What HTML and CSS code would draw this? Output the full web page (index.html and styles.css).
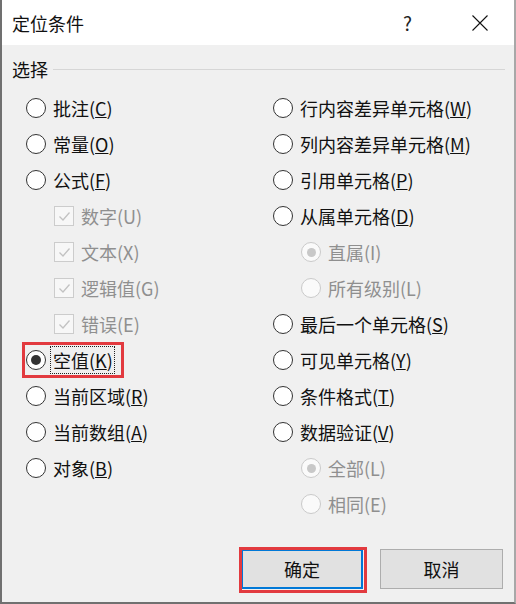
FILE: index.html
```html
<!DOCTYPE html>
<html lang="zh-CN">
<head>
<meta charset="utf-8">
<title>定位条件</title>
<link rel="stylesheet" href="styles.css">
</head>
<body>
<div class="dialog">
  <div class="titlebar">
    <span class="title">定位条件</span>
    <span class="help">?</span>
    <span class="close"><svg width="16" height="16" viewBox="0 0 16 16"><path d="M0.5 0.5 L15.5 15.5 M15.5 0.5 L0.5 15.5" stroke="#111" stroke-width="1.1" fill="none"/></svg></span>
  </div>
  <div class="body">
    <div class="group"><span class="group-label">选择</span><span class="rule"></span></div>
    <div class="options">
      <div class="col">
        <div class="opt"><span class="radio"></span><span class="lbl">批注(<u>C</u>)</span></div>
        <div class="opt"><span class="radio"></span><span class="lbl">常量(<u>O</u>)</span></div>
        <div class="opt"><span class="radio"></span><span class="lbl">公式(<u>F</u>)</span></div>
        <div class="opt sub disabled"><span class="check"><svg width="15" height="15" viewBox="0 0 15 15"><path d="M2.5 7.5 L6 11 L12.5 3.5" stroke="#c2c2c2" stroke-width="1.3" fill="none"/></svg></span><span class="lbl">数字(U)</span></div>
        <div class="opt sub disabled"><span class="check"><svg width="15" height="15" viewBox="0 0 15 15"><path d="M2.5 7.5 L6 11 L12.5 3.5" stroke="#c2c2c2" stroke-width="1.3" fill="none"/></svg></span><span class="lbl">文本(X)</span></div>
        <div class="opt sub disabled"><span class="check"><svg width="15" height="15" viewBox="0 0 15 15"><path d="M2.5 7.5 L6 11 L12.5 3.5" stroke="#c2c2c2" stroke-width="1.3" fill="none"/></svg></span><span class="lbl">逻辑值(G)</span></div>
        <div class="opt sub disabled"><span class="check"><svg width="15" height="15" viewBox="0 0 15 15"><path d="M2.5 7.5 L6 11 L12.5 3.5" stroke="#c2c2c2" stroke-width="1.3" fill="none"/></svg></span><span class="lbl">错误(E)</span></div>
        <div class="opt marked"><span class="radio on"></span><span class="lbl focus">空值(<u>K</u>)</span></div>
        <div class="opt"><span class="radio"></span><span class="lbl">当前区域(<u>R</u>)</span></div>
        <div class="opt"><span class="radio"></span><span class="lbl">当前数组(<u>A</u>)</span></div>
        <div class="opt"><span class="radio"></span><span class="lbl">对象(<u>B</u>)</span></div>
      </div>
      <div class="col">
        <div class="opt"><span class="radio"></span><span class="lbl">行内容差异单元格(<u>W</u>)</span></div>
        <div class="opt"><span class="radio"></span><span class="lbl">列内容差异单元格(<u>M</u>)</span></div>
        <div class="opt"><span class="radio"></span><span class="lbl">引用单元格(<u>P</u>)</span></div>
        <div class="opt"><span class="radio"></span><span class="lbl">从属单元格(<u>D</u>)</span></div>
        <div class="opt sub disabled"><span class="radio on"></span><span class="lbl">直属(I)</span></div>
        <div class="opt sub disabled"><span class="radio"></span><span class="lbl">所有级别(L)</span></div>
        <div class="opt"><span class="radio"></span><span class="lbl">最后一个单元格(<u>S</u>)</span></div>
        <div class="opt"><span class="radio"></span><span class="lbl">可见单元格(<u>Y</u>)</span></div>
        <div class="opt"><span class="radio"></span><span class="lbl">条件格式(<u>T</u>)</span></div>
        <div class="opt"><span class="radio"></span><span class="lbl">数据验证(<u>V</u>)</span></div>
        <div class="opt sub disabled"><span class="radio on"></span><span class="lbl">全部(L)</span></div>
        <div class="opt sub disabled"><span class="radio"></span><span class="lbl">相同(E)</span></div>
      </div>
    </div>
    <div class="buttons">
      <button class="btn default marked-btn">确定</button>
      <button class="btn">取消</button>
    </div>
  </div>
</div>
</body>
</html>
```

FILE: styles.css
```css
* { box-sizing: border-box; }
html, body { margin: 0; padding: 0; background: #f0f0f0; }
body {
  font-family: "Noto Sans CJK SC", "Noto Sans", sans-serif;
  color: #111;
}
.dialog {
  width: 516px;
  height: 604px;
  background: #f0f0f0;
  border-left: 2px solid #707070;
  border-right: 2px solid #a8a8a8;
  border-bottom: 2px solid #707070;
  display: flex;
  flex-direction: column;
}
.titlebar {
  height: 45px;
  background: #fff;
  display: flex;
  align-items: center;
  padding-left: 10px;
  flex: none;
}
.title { font-size: 18px; line-height: 24px; flex: 1; }
.help { font-size: 19px; line-height: 24px; width: 16px; margin-right: 53px; color: #222; }
.close { width: 16px; height: 16px; margin-right: 26px; display: flex; }
.body { flex: 1; display: flex; flex-direction: column; }
.group {
  display: flex;
  align-items: center;
  height: 36px;
  margin-top: 6px;
  padding-left: 10px;
  padding-right: 9px;
}
.group-label { font-size: 18px; line-height: 24px; }
.rule { flex: 1; height: 1px; background: #d6d6d6; margin-left: 5px; }
.options {
  display: grid;
  grid-template-columns: 247px 1fr;
  margin-top: 3px;
  padding-left: 24px;
}
.col { display: flex; flex-direction: column; }
.opt {
  height: 36px;
  display: flex;
  align-items: center;
  font-size: 18px;
  position: relative;
  align-self: flex-start;
}
.opt.sub { margin-left: 28px; }
.lbl { margin-left: 7px; line-height: 24px; white-space: nowrap; }
.lbl u { text-decoration-thickness: 1px; text-underline-offset: 1px; }
.radio {
  width: 20px;
  height: 20px;
  border-radius: 50%;
  border: 1px solid #333;
  background: #fff;
  flex: none;
  display: flex;
  align-items: center;
  justify-content: center;
}
.radio.on::before {
  content: "";
  width: 10px;
  height: 10px;
  border-radius: 50%;
  background: #333;
}
.check {
  width: 20px;
  height: 20px;
  border: 1px solid #cccccc;
  background: #f7f7f7;
  flex: none;
  display: flex;
  align-items: center;
  justify-content: center;
}
.disabled { color: #8f8f8f; }
.disabled .radio { border-color: #cacaca; background: #fafafa; }
.disabled .radio.on::before { background: #c8c8c8; width: 9px; height: 9px; }
.focus { outline: 1px dotted #222; outline-offset: 1px; margin-left: 6px; padding: 0 0 0 1px; }
.marked::after {
  content: "";
  position: absolute;
  left: -4px;
  right: -11px;
  top: 0;
  bottom: 0;
  border: 3px solid #e23a3f;
}
.buttons {
  display: flex;
  gap: 17px;
  margin-top: 27px;
  padding-left: 239px;
}
.btn {
  width: 123px;
  height: 40px;
  font-family: "Noto Sans CJK SC", "Noto Sans", sans-serif;
  font-size: 18px;
  color: #111;
  background: #e1e1e1;
  border: 1px solid #adadad;
  padding: 0;
  position: relative;
}
.btn.default { border: 2px solid #0078d7; width: 122px; }
.marked-btn::after {
  content: "";
  position: absolute;
  left: -4px;
  top: -4px;
  right: -6px;
  bottom: -6px;
  border: 3px solid #e23a3f;
}
```
